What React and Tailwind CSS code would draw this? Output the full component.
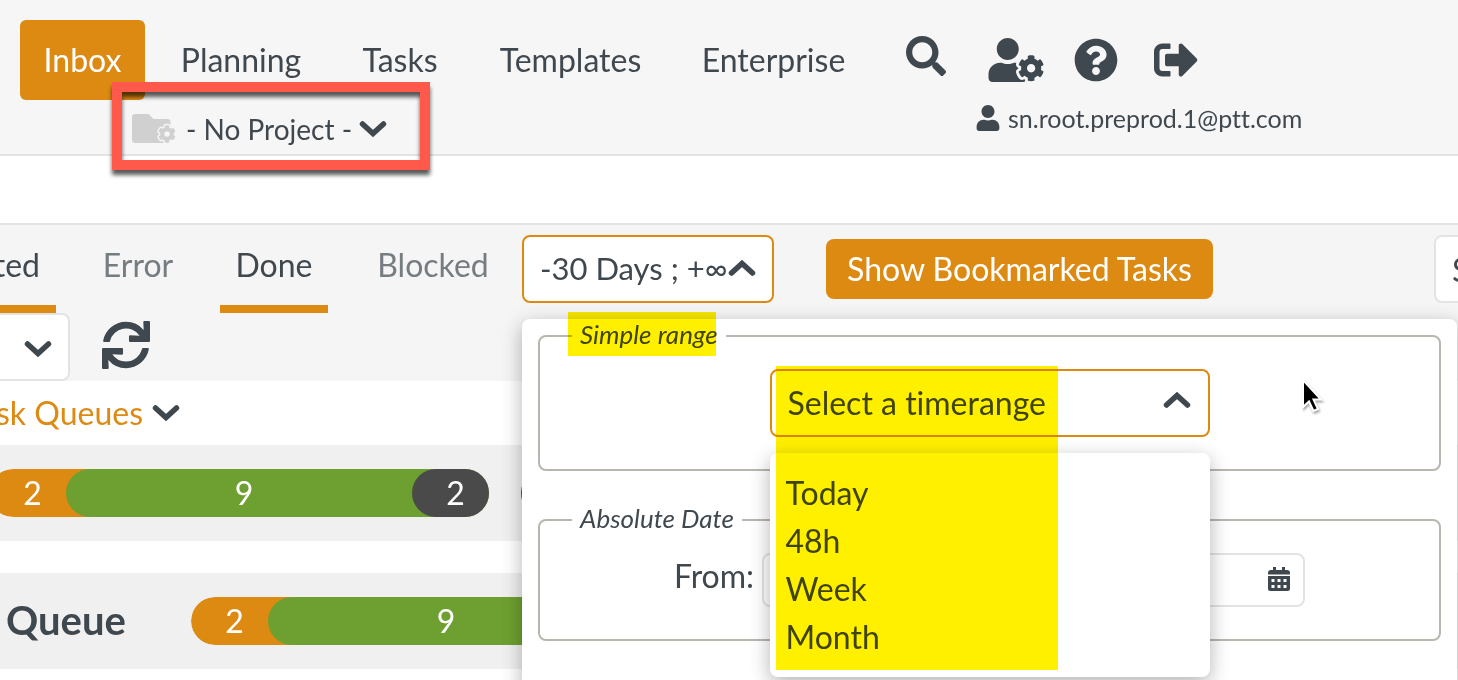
import { useState } from 'react'
import { FaCog, FaQuestionCircle, FaSearch, FaSignOutAlt, FaSync, FaUser, FaUserCog } from 'react-icons/fa'

const NAV_ITEMS = [
  { label: 'Inbox', active: true },
  { label: 'Planning' },
  { label: 'Tasks' },
  { label: 'Templates' },
  { label: 'Enterprise' },
]

const STATUS_TABS = [
  { label: 'Error', active: false },
  { label: 'Done', active: true },
  { label: 'Blocked', active: false },
]

const TIME_RANGES = ['Today', '48h', 'Week', 'Month']

export default function App() {
  return (
    <div className="isolate flex h-screen flex-col overflow-hidden bg-white font-['Lato','Open_Sans',sans-serif] text-[32px] leading-10 text-[#40484f] [font-variant-ligatures:none]">
      <Header />
      <div className="h-[69px] shrink-0 border-b-2 border-[#e3e3e3]" />
      <FilterBar />
      <TaskQueues />
    </div>
  )
}

function Header() {
  return (
    <header className="flex h-[156px] shrink-0 border-b-2 border-[#e3e3e3] bg-[#f6f6f6] pt-5 pl-5">
      <div>
        <nav className="grid grid-cols-[125px_168px_126px_191px_191px] gap-x-3">
          {NAV_ITEMS.map((item) => (
            <a
              key={item.label}
              href="#"
              className={`flex h-20 items-center justify-center rounded-md ${item.active ? 'bg-[#dd8a13] text-white' : ''}`}
            >
              {item.label}
            </a>
          ))}
        </nav>
        <ProjectSelect />
      </div>
      <button type="button" aria-label="Search" className="ml-[37px] h-[72px]">
        <FaSearch className="size-10" />
      </button>
      <div className="ml-[30px]">
        <div className="flex h-20 items-center pl-3">
          <button type="button" aria-label="User settings">
            <FaUserCog className="h-11 w-14" />
          </button>
          <button type="button" aria-label="Help" className="ml-[30px]">
            <FaQuestionCircle className="size-11" />
          </button>
          <button type="button" aria-label="Log out" className="ml-9">
            <FaSignOutAlt className="size-11" />
          </button>
        </div>
        <div className="flex h-9 items-center gap-2 text-[25px]">
          <FaUser className="h-[26px] w-6" />
          sn.root.preprod.1@ptt.com
        </div>
      </div>
    </header>
  )
}

function ProjectSelect() {
  return (
    <div className="relative ml-28 flex h-[54px] w-64 items-center gap-2 pt-1">
      <FolderCogIcon />
      <select
        aria-label="Project"
        className="h-10 w-52 appearance-none bg-transparent text-[28px] leading-10 outline-none"
      >
        <option>- No Project -</option>
      </select>
      <Chevron className="pointer-events-none absolute top-5 left-[227px]" />
      <div className="pointer-events-none absolute -top-[18px] -left-5 h-[88px] w-[318px] border-10 border-[#ff594c] drop-shadow-[0_5px_2px_rgba(0,0,0,0.65)]" />
    </div>
  )
}

function FilterBar() {
  return (
    <div className="h-[156px] shrink-0 bg-[#f5f5f5]">
      <div className="flex h-22">
        <div className="flex w-14 justify-end overflow-hidden border-b-8 border-[#dd8a13]">
          <button type="button" className="h-20 pr-4">
            Started
          </button>
        </div>
        <div className="ml-8 grid grid-cols-[100px_108px_146px] gap-x-8">
          {STATUS_TABS.map((tab) => (
            <button
              key={tab.label}
              type="button"
              className={`h-22 border-b-8 ${tab.active ? 'border-[#dd8a13]' : 'border-transparent text-[#757d80]'}`}
            >
              {tab.label}
            </button>
          ))}
        </div>
        <RangeFilter />
        <button
          type="button"
          className="mt-[14px] ml-[52px] h-15 w-[387px] rounded-lg bg-[#dd8a13] text-white"
        >
          Show Bookmarked Tasks
        </button>
        <div className="mt-[10px] ml-auto w-6 overflow-hidden">
          <input
            aria-label="Search tasks"
            placeholder="Search"
            className="h-17 w-60 rounded-lg border-2 border-[#e3e3e3] bg-white px-4 placeholder:text-[#40484f]"
          />
        </div>
      </div>
      <div className="flex items-start gap-8">
        <div className="flex h-17 w-[70px] items-center justify-end rounded-r-lg border-2 border-l-0 border-[#e3e3e3] bg-white pt-1 pr-4">
          <select aria-label="Page size" className="w-0 appearance-none" />
          <Chevron />
        </div>
        <button type="button" aria-label="Refresh" className="mt-2">
          <FaSync className="size-12" />
        </button>
      </div>
    </div>
  )
}

function RangeFilter() {
  return (
    <div className="relative mt-[10px] ml-4 h-17 w-[252px]">
      <button
        type="button"
        className="flex h-17 w-full items-center justify-between rounded-lg border-2 border-[#dd8a13] bg-white px-4 pb-[2px] text-[31px] whitespace-nowrap"
      >
        -30 Days ; +∞
        <Chevron up />
      </button>
      <div className="absolute top-21 left-0 w-[calc(100vw-523px)] rounded-lg bg-white px-4 pb-12 shadow-[0_6px_20px_rgba(0,0,0,0.3)]">
        <Fieldset legend="Simple range">
          <TimeRangeSelect />
        </Fieldset>
        <Fieldset legend="Absolute Date">
          <div className="flex items-start justify-center gap-2">
            <label htmlFor="date-from" className="h-12 leading-[46px]">
              From:
            </label>
            <div className="relative">
              <input
                id="date-from"
                className="block h-[54px] w-[543px] rounded-lg border-2 border-[#e3e3e3] bg-white px-4"
              />
              <CalendarIcon />
            </div>
          </div>
        </Fieldset>
        <TimeRangeOptions />
      </div>
      <div className="pointer-events-none absolute top-[77px] left-[46px] h-11 w-[148px] bg-[#fff000] mix-blend-multiply" />
      <div className="pointer-events-none absolute top-[131px] left-[254px] h-[304px] w-[282px] bg-[#fff000] mix-blend-multiply" />
      <Cursor />
    </div>
  )
}

function Fieldset({ legend, children }) {
  return (
    <fieldset className="mb-8 rounded-lg border-2 border-[#b9b6b0] px-8 pb-8">
      <legend className="mb-4 px-2 pb-1 text-[26px] leading-[30px] italic">{legend}</legend>
      {children}
    </fieldset>
  )
}

function TimeRangeSelect() {
  const [value, setValue] = useState('')

  return (
    <div className="relative mx-auto h-17 w-110">
      <select
        aria-label="Time range"
        value={value}
        onChange={(event) => setValue(event.target.value)}
        className="h-17 w-full appearance-none rounded-lg border-2 border-[#dd8a13] bg-white px-4 leading-10 outline-none"
      >
        <option value="">Select a timerange</option>
        {TIME_RANGES.map((range) => (
          <option key={range}>{range}</option>
        ))}
      </select>
      <Chevron up className="pointer-events-none absolute top-[22px] right-[19px]" />
    </div>
  )
}

function TimeRangeOptions() {
  return (
    <ul className="absolute top-[134px] left-1/2 w-110 -translate-x-1/2 rounded-lg bg-white p-4 shadow-[0_6px_20px_rgba(0,0,0,0.3)]">
      {TIME_RANGES.map((range) => (
        <li key={range}>
          <button type="button" className="block h-12 w-full text-left">
            {range}
          </button>
        </li>
      ))}
    </ul>
  )
}

function TaskQueues() {
  return (
    <main>
      <div className="flex h-16 items-center gap-[9px]">
        <h2 className="flex w-[143px] justify-end overflow-hidden whitespace-nowrap text-[#dd8a13]">Task Queues</h2>
        <Chevron />
      </div>
      <div className="mb-8 flex h-24 items-center gap-8 overflow-hidden bg-[#f0f0f0]">
        <QueueBar className="-ml-[11px]" />
        <div className="h-12 w-[500px] shrink-0 rounded-full bg-[#4a4a4a]" />
      </div>
      <div className="flex h-24 items-center overflow-hidden bg-[#f0f0f0] pl-[6px]">
        <h3 className="w-[185px] shrink-0 pb-[2px] text-[40px] font-bold">Queue</h3>
        <QueueBar />
      </div>
    </main>
  )
}

// each segment is rounded on the left and sits on the colour of the one before it
function QueueBar({ className = '' }) {
  return (
    <div
      className={`grid h-12 w-[500px] shrink-0 grid-cols-[77px_1fr_77px] overflow-hidden rounded-full text-center leading-12 text-white ${className}`}
    >
      <div className="rounded-l-full bg-[#dd8a13] pl-[10px]">2</div>
      <div className="bg-[#dd8a13]">
        <div className="rounded-l-full bg-[#6da030] pl-[10px]">9</div>
      </div>
      <div className="bg-[#6da030]">
        <div className="rounded-l-full bg-[#4a4a4a] pl-[10px]">2</div>
      </div>
    </div>
  )
}

function Chevron({ up = false, className = '' }) {
  return (
    <svg viewBox="0 0 28 18" fill="none" className={`h-[18px] w-7 shrink-0 ${up ? 'rotate-180' : ''} ${className}`}>
      <path d="M3.500 4 14 13.500 24.500 4" stroke="#40484f" strokeWidth="5.500" strokeLinecap="round" />
    </svg>
  )
}

function FolderCogIcon() {
  return (
    <svg viewBox="0 0 46 31" className="h-[31px] w-[46px] shrink-0 text-[#d0d0d0]">
      <path
        d="M3 0h12c1 0 2 .4 2.700 1.100L21.500 5H35.500a3 3 0 0 1 3 3v18a3 3 0 0 1-3 3H3a3 3 0 0 1-3-3V3a3 3 0 0 1 3-3z"
        fill="currentColor"
      />
      <circle cx="35" cy="20" r="8" fill="#f6f6f6" />
      <FaCog x="26" y="11" size={18} stroke="#f6f6f6" strokeWidth="80" paintOrder="stroke" overflow="visible" />
    </svg>
  )
}

function CalendarIcon() {
  return (
    <svg viewBox="0 0 22 24" className="pointer-events-none absolute top-[14px] right-[15px] h-6 w-[22px]">
      <path d="M5 0h3v3h6V0h3v3h2a3 3 0 0 1 3 3v1.500H0V6a3 3 0 0 1 3-3h2z" fill="#40484f" />
      <path
        fillRule="evenodd"
        d="M0 9h22v12.500a2.500 2.500 0 0 1-2.500 2.500h-17A2.500 2.500 0 0 1 0 21.500zM3.500 12v3h3v-3zM9.500 12v3h3v-3zM15.500 12v3h3v-3zM3.500 18v3h3v-3zM9.500 18v3h3v-3zM15.500 18v3h3v-3z"
        fill="#40484f"
      />
    </svg>
  )
}

function Cursor() {
  return (
    <svg
      viewBox="0 0 24 36"
      className="pointer-events-none absolute top-[143px] left-[779px] h-9 w-6 drop-shadow-[1px_2px_1px_rgba(0,0,0,0.35)]"
    >
      <path
        d="M2 2v27l6-5.500 4.500 9.500 4.500-2-4.500-9.500H20z"
        fill="#000"
        stroke="#fff"
        strokeWidth="2"
      />
    </svg>
  )
}
